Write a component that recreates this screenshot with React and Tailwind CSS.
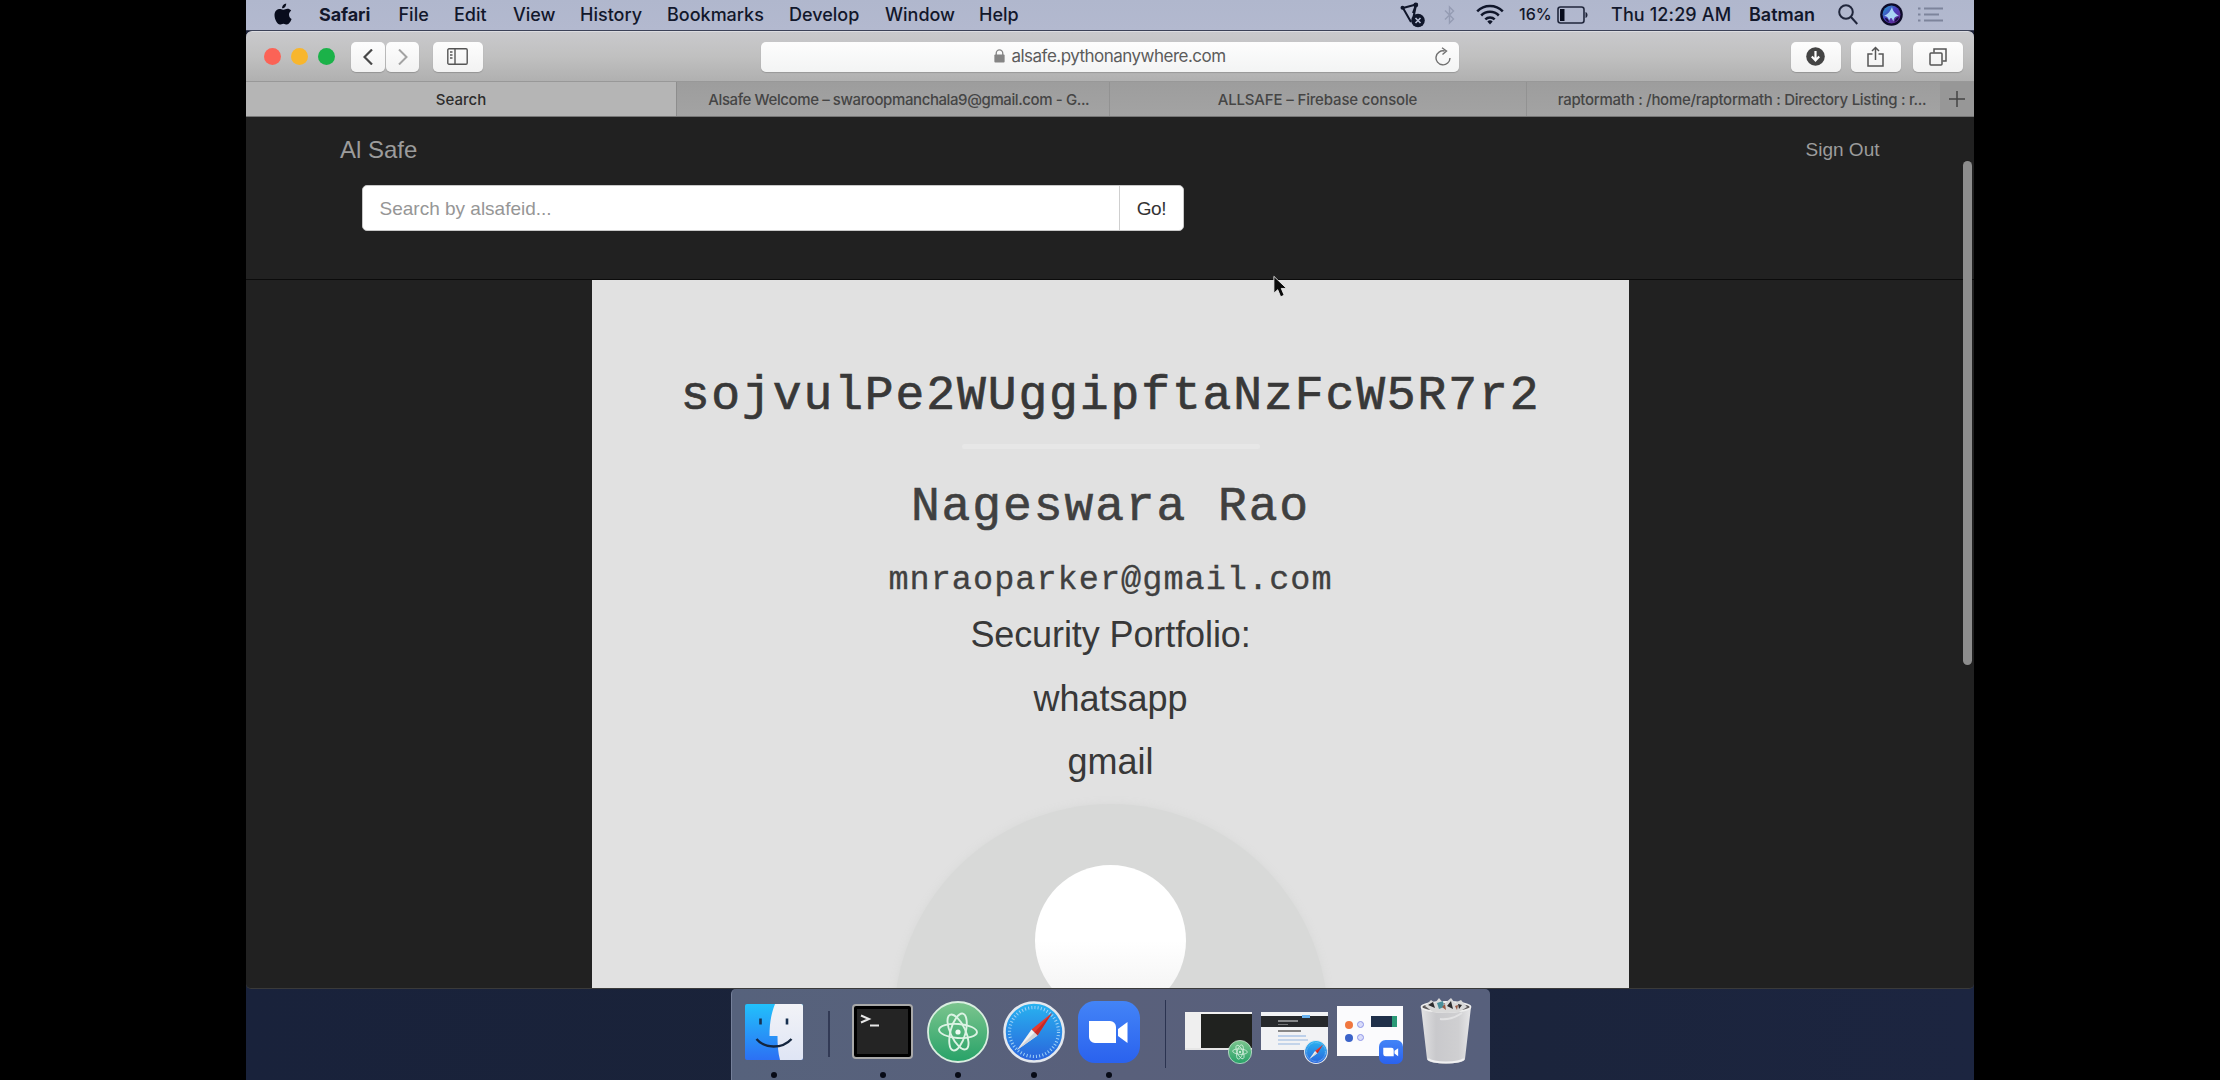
import React from "react";

const MENU = [
  ["Safari", "w-[79.5px] font-bold tracking-[-0.1px]"],
  ["File", "w-[55.5px] font-medium"],
  ["Edit", "w-[59px] font-medium"],
  ["View", "w-[67px] font-medium"],
  ["History", "w-[87px] font-medium"],
  ["Bookmarks", "w-[122px] font-medium"],
  ["Develop", "w-[96px] font-medium"],
  ["Window", "w-[94px] font-medium"],
  ["Help", "font-medium"],
];

function Apple() {
  return (
    <svg className="h-[22px] w-[18px]" viewBox="0 0 18 22" fill="#080c1c">
      <path d="M12.2 0.5c.1 1.300-.4 2.500-1.100 3.400-.8 1-1.900 1.500-3 1.400-.1-1.200.4-2.400 1.100-3.200.8-.9 2-1.500 3-1.600zM15 11.500c0-2 1.200-3.100 2.200-3.800-1-1.500-2.500-1.900-3.500-1.900-1.700-.1-3 .9-4 .9-.9 0-2.100-.9-3.500-.8C3.200 5.900.5 7.800.5 12c0 4.500 3 9.500 5.400 9.500 1.200 0 1.900-.8 3.500-.8 1.500 0 2.200.8 3.500.8 2 0 4-3.300 4.700-5.500-1.600-.7-2.600-2.300-2.600-4.500z" />
    </svg>
  );
}

function Location() {
  return (
    <svg className="h-[26px] w-[26px]" viewBox="0 0 26 26" fill="none" stroke="#10162a" strokeWidth="2">
      <path d="M3 6 16 2.500 13 11M3 6l8 14" />
      <path d="m16 3-2.500 12" />
      <circle cx="2.500" cy="5.800" r="2" fill="#10162a" stroke="none" />
      <circle cx="15.800" cy="3" r="2.400" fill="#10162a" stroke="none" />
      <circle cx="18" cy="18.500" r="6.800" fill="#10162a" stroke="none" />
      <path d="m15.500 16 5 5m0-5-5 5" stroke="#b7bed4" strokeWidth="1.600" />
    </svg>
  );
}

function Bluetooth() {
  return (
    <svg className="h-5 w-[11px]" viewBox="0 0 11 20" fill="none" stroke="#959cb3" strokeWidth="1.400">
      <path d="m1 5.500 8.500 8.500L5.500 18V2l4 4L1 14.500" />
    </svg>
  );
}

function Wifi() {
  return (
    <svg className="h-[21px] w-[28px]" viewBox="0 0 28 21" fill="none" stroke="#10162a" strokeWidth="2.500">
      <path d="M1.200 7.300a18.100 18.100 0 0 1 25.600 0M5.200 11.500a12.400 12.400 0 0 1 17.600 0M9.300 15.400a6.700 6.700 0 0 1 9.400 0" />
      <path d="m14 20.500-2.700-2.900a4 4 0 0 1 5.400 0z" fill="#10162a" stroke="none" />
    </svg>
  );
}

function Battery() {
  return (
    <svg className="h-[18px] w-[31px]" viewBox="0 0 31 18" fill="none">
      <rect x="1" y="1" width="26" height="16" rx="2.500" stroke="#20263b" strokeWidth="1.600" />
      <rect x="3" y="3" width="4.500" height="12" fill="#080c1c" />
      <path d="M28.500 6v6c1.500-.6 2-1.700 2-3s-.5-2.400-2-3z" fill="#20263b" />
    </svg>
  );
}

function Siri() {
  return (
    <svg className="h-[23px] w-[23px]" viewBox="0 0 23 23">
      <defs>
        <linearGradient id="siri" x1="0" y1="0" x2="1" y2="1">
          <stop offset="0" stopColor="#1fa9cc" />
          <stop offset=".45" stopColor="#4a3fc0" />
          <stop offset="1" stopColor="#6a1f80" />
        </linearGradient>
      </defs>
      <circle cx="11.500" cy="11.500" r="11.300" fill="#0d0b28" />
      <circle cx="11.500" cy="11.500" r="9" fill="url(#siri)" />
      <path d="M12 4c1 4 2.500 6.500 7 9-3 0-5 .5-5.500 5.500C12 16 12 15 11 15s-1.500 2-2 3c-.5-3.500-2-5-5-5 4.500-2 6.500-5 8-9z" fill="#a9d4f4" />
      <path d="M5 15c2 0 3.500 1 4 4-2-.5-3.500-2-4-4zM19 14c-2.500.5-4 2-4.500 5 2.500-1 4-3 4.500-5z" fill="#1a1040" />
    </svg>
  );
}

function ListIcon() {
  return (
    <svg className="h-[17px] w-[25px]" viewBox="0 0 25 17" stroke="#7d849b" strokeWidth="2">
      <path d="M0 2.500h2.500M6 2.500h19M0 8.500h2.500M6 8.500h15M0 14.500h2.500M6 14.500h19" />
    </svg>
  );
}

function MenuBar() {
  return (
    <div className="flex h-[31px] shrink-0 items-center border-b border-[#3c4258] bg-gradient-to-b from-[#b0b7cd] to-[#b3b9cf] pb-px text-[18px] leading-[29px] text-[#12172b]">
      <div className="ml-[28px] mr-[27px] flex w-[18px] pb-[2px]"><Apple /></div>
      {MENU.map(([t, c]) => (
        <div key={t} className={c}>{t}</div>
      ))}
      <div className="ml-auto flex h-full items-center whitespace-nowrap font-medium">
        <div className="w-[43.500px]"><Location /></div>
        <div className="w-[32.500px]"><Bluetooth /></div>
        <div className="w-[43px]"><Wifi /></div>
        <div className="w-[38px] text-[16px]">16%</div>
        <div className="w-[54px]"><Battery /></div>
        <div className="w-[138px] tracking-[0.130px]">Thu 12:29 AM</div>
        <div className="w-[89px] font-semibold">Batman</div>
        <svg className="mr-[22px] h-[21px] w-[20px]" viewBox="0 0 20 21" fill="none" stroke="#20263b" strokeWidth="2">
          <circle cx="8" cy="8" r="6.800" /><path d="m13 13 6.300 7" />
        </svg>
        <div className="mr-[15px]"><Siri /></div>
        <div className="mr-[31px]"><ListIcon /></div>
      </div>
    </div>
  );
}

function ToolButton({ className, children }) {
  return (
    <div className={"flex h-[30px] items-center justify-center rounded-[5px] bg-gradient-to-b from-[#fdfdfd] to-[#f2f2f2] shadow-[0_1px_1px_#949494] " + className}>
      {children}
    </div>
  );
}

function Toolbar() {
  return (
    <div className="bg-[#1c2238]">
      <div className="flex h-[51px] items-center rounded-t-[6px] border-b border-t border-b-[#989898] border-t-[#dcdce0] bg-gradient-to-b from-[#c9c9cc] via-[#c0c0c0] to-[#b0b0b0]">
        <div className="ml-[17.500px] flex gap-[10px]">
          <div className="size-[17px] rounded-full bg-[#fb6356]" />
          <div className="size-[17px] rounded-full bg-[#f8b62d]" />
          <div className="size-[17px] rounded-full bg-[#1bb249]" />
        </div>
        <ToolButton className="ml-[16px] w-[34px]">
          <svg className="h-4 w-[10px]" viewBox="0 0 10 16" fill="none" stroke="#484848" strokeWidth="2.200"><path d="M9 0.500 1.500 8 9 15.500" /></svg>
        </ToolButton>
        <ToolButton className="ml-[1.500px] w-[33px]">
          <svg className="h-4 w-[10px]" viewBox="0 0 10 16" fill="none" stroke="#a3a3a3" strokeWidth="2"><path d="m1 .5 7.500 7.500L1 15.500" /></svg>
        </ToolButton>
        <ToolButton className="ml-[13.500px] w-[50px]">
          <svg className="h-[17px] w-[21px]" viewBox="0 0 21 17" fill="none" stroke="#555" strokeWidth="1.400">
            <rect x=".8" y=".8" width="19.400" height="15.400" rx="1.200" />
            <path d="M8 1v15M3 4h2.500M3 7h2.500M3 10h2.500" />
          </svg>
        </ToolButton>
        <div className="ml-[278px] flex h-[30px] w-[698px] items-center rounded-[5px] bg-gradient-to-b from-[#fdfdfd] to-[#f3f4f4] text-[17px] tracking-[-0.520px] text-[#5c5c5c] shadow-[0_1px_1px_#989898]">
          <svg className="mb-px ml-[233px] h-[14px] w-[11px]" viewBox="0 0 11 15" fill="#858585">
            <rect y="6" width="11" height="8.500" rx="1" />
            <path d="M2 7V4.500a3.500 3.500 0 0 1 7 0V7" fill="none" stroke="#858585" strokeWidth="1.400" />
          </svg>
          <span className="ml-[7px] w-[423px] whitespace-nowrap">alsafe.pythonanywhere.com</span>
          <svg className="mb-px h-[19px] w-4" viewBox="0 0 16 19" fill="none" stroke="#707070" strokeWidth="1.400">
            <path d="M9.500 4A7 7 0 1 0 15 11M7 0.800 11.500 4 7.500 7.500" />
          </svg>
        </div>
        <ToolButton className="ml-[332px] w-[50px]">
          <svg className="size-[19px]" viewBox="0 0 19 19"><circle cx="9.500" cy="9.500" r="9.300" fill="#444" /><path d="M9.500 4v9M5.800 9.500l3.700 4 3.700-4" fill="none" stroke="#fff" strokeWidth="2.200" /></svg>
        </ToolButton>
        <ToolButton className="ml-[10px] w-[50px]">
          <svg className="mb-px h-[21px] w-[17px]" viewBox="0 0 17 21" fill="none" stroke="#555" strokeWidth="1.500"><path d="M5.500 8H1v12h15V8h-4.500M8.500 14V1.500M5 5l3.500-3.500L12 5" /></svg>
        </ToolButton>
        <ToolButton className="ml-[12px] w-[50px]">
          <svg className="h-[18px] w-[18px]" viewBox="0 0 18 18" fill="none" stroke="#555" strokeWidth="1.500"><rect x="1" y="5" width="12" height="12" rx="1" /><path d="M5 4.500V1h12v12h-3.500" /></svg>
        </ToolButton>
      </div>
    </div>
  );
}

function Tabs() {
  return (
    <div className="flex h-[35px] shrink-0 border-b border-[#767676] bg-gradient-to-b from-[#9d9d9d] to-[#a3a3a3] text-center text-[15px] font-medium leading-[35px] text-[#454545] [&>div]:whitespace-nowrap">
      <div className="w-[431px] border-r border-[#8d8d8d] bg-[#b5b5b5] text-[#2c2c2c]">Search</div>
      <div className="w-[432.500px] border-r border-[#929292] pl-[12px] tracking-[-0.400px]">Alsafe Welcome – swaroopmanchala9@gmail.com - G...</div>
      <div className="w-[417px] border-r border-[#929292] tracking-[-0.150px]">ALLSAFE – Firebase console</div>
      <div className="w-[413px] pl-[18px] tracking-[-0.280px]">raptormath : /home/raptormath : Directory Listing : r...</div>
      <div className="flex grow items-center justify-center bg-[#979797]">
        <svg className="size-4" viewBox="0 0 16 16" stroke="#444" strokeWidth="1.500"><path d="M8 0v16M0 8h16" /></svg>
      </div>
    </div>
  );
}

function Page() {
  return (
    <div className="relative flex h-[872px] shrink-0 flex-col overflow-hidden rounded-b-[5px] border-b border-[#3a3a3a] bg-[#212121] font-['Liberation_Sans',Arial,sans-serif]">
      <div className="h-[163px] shrink-0 border-b border-[#0b0b0b]">
        <div className="flex h-[67.500px] items-start justify-between pl-[94px] pr-[94.500px] text-[#9c9c9c]">
          <span className="mt-[17px] text-[24px] leading-[32px]">Al Safe</span>
          <span className="mt-[17px] text-[19px] leading-[32px]">Sign Out</span>
        </div>
        <div className="ml-[116px] flex h-[46px] w-[822px] overflow-hidden rounded-[5px] border border-[#c8c8c8] bg-white text-[19px] leading-[45px]">
          <div className="w-[757px] border-r border-[#cfcfcf] pl-[16.500px] text-[#969696]">Search by alsafeid...</div>
          <div className="grow text-center tracking-[-0.300px] text-[#333]">Go!</div>
        </div>
      </div>
      <div className="ml-[346px] flex w-[1037px] grow flex-col items-center overflow-hidden bg-[#e1e1e1] text-center text-[#383838]">
        <h1 className="mt-[86px] h-[60px] shrink-0 font-['Liberation_Mono','Courier_New',monospace] text-[48px] leading-[60px] tracking-[1.900px] [-webkit-text-stroke:0.7px_#383838]">sojvulPe2WUggipftaNzFcW5R7r2</h1>
        <div className="mt-[18px] h-[5px] w-[298px] shrink-0 rounded-full bg-[#e7e7e7]" />
        <h2 className="mt-[28px] h-[60px] shrink-0 font-['Liberation_Mono','Courier_New',monospace] text-[48px] leading-[60px] tracking-[1.900px] text-[#404040] [-webkit-text-stroke:0.6px_#404040]">Nageswara Rao</h2>
        <p className="mt-[23px] h-[40px] shrink-0 font-['Liberation_Mono','Courier_New',monospace] text-[33.500px] leading-[40px] tracking-[1.050px] text-[#404040] [-webkit-text-stroke:0.3px_#404040]">mnraoparker@gmail.com</p>
        <p className="mt-[15px] h-[40px] shrink-0 text-[36px] leading-[40px] tracking-[-0.100px]">Security Portfolio:</p>
        <p className="mt-[24px] h-[40px] shrink-0 text-[36px] leading-[40px]">whatsapp</p>
        <p className="mt-[23px] h-[40px] shrink-0 text-[36px] leading-[40px]">gmail</p>
        <div className="mt-[22px] flex size-[434px] shrink-0 justify-center rounded-full bg-[#d8d9d8] shadow-[0_0_8px_#d8d9d8]">
          <div className="mt-[61px] size-[151px] rounded-full bg-gradient-to-b from-white via-white to-[#f0f0f0]" />
        </div>
      </div>
      <div className="absolute right-[2.500px] top-[44px] h-[504px] w-[9px] rounded-full bg-[#8d8d8d]" />
      <svg className="absolute left-[1027px] top-[158px] h-[24px] w-[16px]" viewBox="0 0 18 26">
        <path d="M1 1v19l4.300-4 3.300 8 4-1.700-3.300-7.700h6z" fill="#0a0a0a" stroke="#eee" strokeWidth="1" />
      </svg>
    </div>
  );
}

function Finder() {
  return (
    <svg className="h-[56px] w-[58px]" viewBox="0 0 58 56">
      <defs>
        <linearGradient id="fnd" x1="0" y1="0" x2="0" y2="1"><stop offset="0" stopColor="#22c1fb" /><stop offset="1" stopColor="#2c70f4" /></linearGradient>
        <linearGradient id="fnr" x1="0" y1="0" x2="0" y2="1"><stop offset="0" stopColor="#f2f3f7" /><stop offset="1" stopColor="#dfe5f5" /></linearGradient>
      </defs>
      <rect width="58" height="56" rx="2" fill="url(#fnd)" />
      <path d="M30 0C26 10 24.500 20 24.500 32h8c0 9 .6 17 2.500 24h21a2 2 0 0 0 2-2V2a2 2 0 0 0-2-2z" fill="url(#fnr)" />
      <path d="M15.500 14.500v6M42 14.500v6" stroke="#173050" strokeWidth="2.600" />
      <path d="M11.500 35c8 10 26 10 35 0" fill="none" stroke="#14263f" strokeWidth="2.400" />
    </svg>
  );
}

function Terminal() {
  return (
    <div className="flex h-[55px] w-[61px] items-start rounded-[4px] border-2 border-[#a9a9a9] bg-black p-[3px]">
      <div className="size-full bg-[#242424] pl-[3px] pt-[5px]">
        <svg className="h-[14px] w-[20px]" viewBox="0 0 20 14" fill="none" stroke="#e8e8e8" strokeWidth="2"><path d="m1 1.500 8 3.500-8 3.500M10 11.500h9" /></svg>
      </div>
    </div>
  );
}

function Atom({ className }) {
  return (
    <svg className={className} viewBox="0 0 62 62">
      <defs><linearGradient id="atm" x1="0" y1="0" x2="0" y2="1"><stop offset="0" stopColor="#7cc58e" /><stop offset="1" stopColor="#27a268" /></linearGradient></defs>
      <circle cx="31" cy="31" r="30" fill="url(#atm)" stroke="#d9eee0" strokeWidth="1.800" />
      <g fill="none" stroke="#dcf3e4" strokeWidth="1.900">
        <ellipse cx="31" cy="30" rx="19" ry="7" transform="rotate(4 31 30)" />
        <ellipse cx="31" cy="31" rx="19" ry="7.500" transform="rotate(65 31 31)" />
        <ellipse cx="31" cy="31" rx="19" ry="7.500" transform="rotate(-75 31 31)" />
      </g>
      <circle cx="31" cy="31" r="2.600" fill="#effaf2" />
    </svg>
  );
}

function Compass({ className }) {
  return (
    <svg className={className} viewBox="0 0 62 62">
      <defs><linearGradient id="cmp" x1="0" y1="0" x2="0" y2="1"><stop offset="0" stopColor="#28b4f0" /><stop offset="1" stopColor="#2a63dc" /></linearGradient></defs>
      <circle cx="31" cy="31" r="29.500" fill="url(#cmp)" stroke="#e4e8ee" strokeWidth="2.600" />
      <circle cx="31" cy="31" r="24.500" fill="none" stroke="#9fd2f7" strokeWidth="3.200" strokeDasharray="1 2.200" />
      <path d="M49 12 34.500 34.500l-6-6z" fill="#e8392f" />
      <path d="M14 49l14.500-20.500 6 6z" fill="#f1f1f1" />
      <path d="M49 12 34.500 34.500l-3-3z" fill="#c42a28" />
      <path d="m14 49 17.500-17.500 3 3z" fill="#cfd2d8" />
    </svg>
  );
}

function Zoom({ className }) {
  return (
    <svg className={className} viewBox="0 0 62 62">
      <defs><linearGradient id="zm" x1="0" y1="0" x2="0" y2="1"><stop offset="0" stopColor="#4384f7" /><stop offset="1" stopColor="#2a62ee" /></linearGradient></defs>
      <rect width="62" height="62" rx="17" fill="url(#zm)" />
      <path d="M11 20h21a6 6 0 0 1 6 6v16H17a6 6 0 0 1-6-6zM40 28l9.500-7v21L40 35z" fill="#fff" />
    </svg>
  );
}

function Trash() {
  return (
    <svg className="h-[67px] w-[52px]" viewBox="0 0 52 67">
      <defs><linearGradient id="trs" x1="0" y1="0" x2="1" y2="0"><stop offset="0" stopColor="#e2e2e4" /><stop offset=".3" stopColor="#c9c9cc" /><stop offset=".75" stopColor="#cfcfd1" /><stop offset="1" stopColor="#e6e6e8" /></linearGradient></defs>
      <path d="M1 10h50l-6 52c-.5 6-37.500 6-38 0z" fill="url(#trs)" />
      <ellipse cx="26" cy="10" rx="24.500" ry="5" fill="#5d5a5b" stroke="#efefef" strokeWidth="1.800" />
      <path d="m5 9 6-6 4 3 4-5 5 6 7-6 4 5 6-3 6 7-8 5-12 1-14-1z" fill="#d9d9d9" />
      <path d="m8 8 5-3 2 6zM27 9l4-5 2 8zM38 7l4 1-3 4z" fill="#2c2b2d" />
      <path d="m17 6 6-2 1 6-5 2z" fill="#4a8f9b" />
      <path d="m22 10 3-3 1 6zM35 9l3-1-1 5z" fill="#9b5a44" />
      <path d="M20 22c8 1 16-2 22-6" stroke="#e2e2e3" strokeWidth="2" fill="none" />
      <path d="M8 62c5 4.500 31 4.500 36 0" stroke="#f0f0f1" strokeWidth="2" fill="none" />
    </svg>
  );
}

function DockItem({ className, running, children }) {
  return (
    <div className={"flex h-[91px] flex-col items-center justify-between pb-[2.500px] " + className}>
      <div className="flex h-[79px] items-center pt-[6px]">{children}</div>
      {running && <div className="size-[6px] rounded-full bg-[#070a16]" />}
    </div>
  );
}

function Dock() {
  return (
    <div className="flex h-[91px] w-[759px] items-start rounded-t-[5px] border-l border-[#75809a] bg-gradient-to-r from-[#56627c] via-[#59607b] to-[#57607c]">
      <DockItem running className="ml-[13px] w-[58px]"><Finder /></DockItem>
      <div className="ml-[25px] mt-[22px] h-[46px] w-[1.500px] bg-[#323a55]" />
      <DockItem running className="ml-[22.500px] w-[61px]"><Terminal /></DockItem>
      <DockItem running className="ml-[14px] w-[62px]"><Atom className="size-[62px]" /></DockItem>
      <DockItem running className="ml-[13.500px] w-[62px]"><Compass className="size-[62px]" /></DockItem>
      <DockItem running className="ml-[13.500px] w-[62px]"><Zoom className="size-[62px]" /></DockItem>
      <div className="ml-[24.500px] mt-[11px] h-[68px] w-[1.500px] bg-[#2b3350]" />
      <div className="relative ml-[19px] mt-[23px] h-[38px] w-[67px] border-t-2 border-[#f0f0f0]">
        <div className="flex h-full border-b-2 border-[#e6e6e6] bg-[#efefef] pl-[16px]"><div className="grow bg-[#20221f]" /></div>
        <Atom className="absolute -bottom-[14px] right-0 size-[24px]" />
      </div>
      <div className="relative ml-[8.500px] mt-[23px] flex h-[38px] w-[67px] flex-col bg-[#f1f2f4] pt-[4px]">
        <div className="flex h-[11px] flex-col items-start gap-[2px] bg-[#26282b] pl-[17px] pt-[4px]">
          <div className="h-[1.500px] w-[20px] bg-[#858789]" />
          <div className="h-px w-[10px] bg-[#727476]" />
        </div>
        <div className="flex flex-col gap-[2px] pl-[17px] pt-[3px]">
          <div className="h-[2px] w-[23px] bg-[#888]" />
          <div className="mt-px h-[2px] w-[28px] bg-[#bcd0ea]" />
          <div className="h-[2px] w-[30px] bg-[#c3d4ea]" />
          <div className="h-[2px] w-[22px] bg-[#c3d4ea]" />
        </div>
        <div className="absolute left-[41px] top-[3px] h-[3px] w-[8px] bg-[#69b2ef]" />
        <Compass className="absolute -bottom-[14px] right-0 size-[24px]" />
      </div>
      <div className="relative ml-[9px] mt-[17px] flex h-[50px] w-[66px] justify-between bg-[#fbfbfd] pl-[8px] pr-[6px] pt-[10px]">
        <div className="mt-[5px] grid h-[20px] grid-cols-2 gap-x-[4px] gap-y-[5px]">
          <div className="size-[8px] rounded-full bg-[#f0773f]" />
          <div className="size-[7px] rounded-full border border-[#8f96e8] bg-[#d9dcfa]" />
          <div className="size-[8px] rounded-full bg-[#3b63c9]" />
          <div className="size-[7px] rounded-full border border-[#8f96e8] bg-[#d9dcfa]" />
        </div>
        <div className="flex h-[11px] w-[26px] justify-end bg-[#20304a]"><div className="w-[5px] bg-[#2a9a77]" /></div>
        <Zoom className="absolute -bottom-[8px] right-0 size-[24px]" />
      </div>
      <div className="ml-[17px] mt-[8px]"><Trash /></div>
    </div>
  );
}

export default function App() {
  return (
    <div className="flex h-[1080px] w-[2220px] justify-center overflow-hidden bg-black font-[Inter,'Liberation_Sans',sans-serif]">
      <div className="flex h-[1080px] w-[1728px] flex-col bg-gradient-to-r from-[#19223b] via-[#1a2338] to-[#1c2540]">
        <MenuBar />
        <Toolbar />
        <Tabs />
        <Page />
        <div className="ml-[485px] flex"><Dock /></div>
      </div>
    </div>
  );
}
